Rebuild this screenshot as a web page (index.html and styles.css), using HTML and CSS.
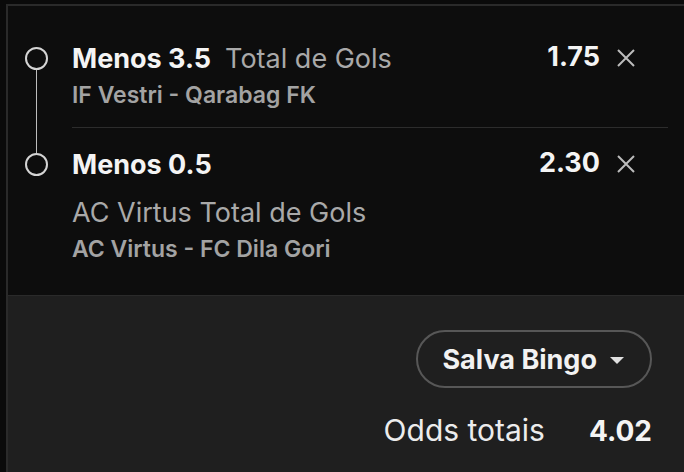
FILE: index.html
```html
<!DOCTYPE html>
<html lang="pt">
<head>
  <meta charset="UTF-8" />
  <meta name="viewport" content="width=device-width, initial-scale=1.0"/>
  <title>Boletim de apostas</title>
  <link rel="stylesheet" href="styles.css">
</head>
<body>
  <div class="slip">
    <ul class="legs">
      <li class="leg leg-first">
        <div class="marker">
          <span class="line line-in"></span>
          <span class="dot"></span>
          <span class="line line-out"></span>
        </div>
        <div class="leg-body">
          <div class="info">
            <div class="title-row">
              <span class="selection">Menos 3.5</span>
              <span class="market">Total de Gols</span>
            </div>
            <div class="event">IF Vestri - Qarabag FK</div>
          </div>
          <div class="odds">1.75</div>
          <button class="remove" title="Remover">
            <svg viewBox="0 0 20 20" width="20" height="20"><path d="M2 2 L18 18 M18 2 L2 18" /></svg>
          </button>
        </div>
      </li>
      <li class="leg leg-last">
        <div class="marker">
          <span class="line line-in"></span>
          <span class="dot"></span>
          <span class="line line-out"></span>
        </div>
        <div class="leg-body">
          <div class="info">
            <div class="title-row">
              <span class="selection">Menos 0.5</span>
            </div>
            <div class="market market-block">AC Virtus Total de Gols</div>
            <div class="event">AC Virtus - FC Dila Gori</div>
          </div>
          <div class="odds">2.30</div>
          <button class="remove" title="Remover">
            <svg viewBox="0 0 20 20" width="20" height="20"><path d="M2 2 L18 18 M18 2 L2 18" /></svg>
          </button>
        </div>
      </li>
    </ul>

    <div class="summary">
      <button class="bet-type">
        <span>Salva Bingo</span>
        <span class="caret"></span>
      </button>
      <div class="total">
        <span class="total-label">Odds totais</span>
        <span class="total-value">4.02</span>
      </div>
    </div>
  </div>
</body>
</html>
```

FILE: styles.css
```css
* {
  box-sizing: border-box;
}

html, body {
  height: 100%;
}

body {
  margin: 0;
  background: #0a0a0a;
  font-family: Inter, 'Noto Sans', sans-serif;
  color: #f2f2f2;
}

.slip {
  margin: 4px 0 0 6px;
  min-height: calc(100% - 4px);
  display: flex;
  flex-direction: column;
  border-top: 2px solid #2a2a2a;
  border-left: 2px solid #2a2a2a;
  background: #0d0d0d;
}

.legs {
  list-style: none;
  margin: 0;
  padding: 0;
}

.leg {
  display: flex;
  --pad: 37px;
}

.leg-last {
  --pad: 21px;
}

/* timeline marker */
.marker {
  width: 64px;
  flex-shrink: 0;
  display: flex;
  flex-direction: column;
  align-items: center;
  padding-right: 8px;
}

.line {
  width: 1px;
  background: #bdbdbd;
}

.line-in {
  height: calc(var(--pad) + 4px);
}

.line-out {
  flex: 1;
}

.leg-first .line-in,
.leg-last .line-out {
  background: transparent;
}

.dot {
  width: 23px;
  height: 23px;
  border: 2px solid #d4d4d4;
  border-radius: 50%;
  flex-shrink: 0;
}

.leg-body {
  flex: 1;
  display: grid;
  grid-template-columns: 1fr auto auto;
  align-items: start;
  column-gap: 14px;
  margin-right: 16px;
  padding: var(--pad) 30px 18px 0;
}

.leg-first .leg-body {
  border-bottom: 1px solid #2c2c2c;
}

.leg-last .leg-body {
  padding-bottom: 32px;
}

.title-row {
  display: flex;
  flex-wrap: wrap;
  column-gap: 14px;
  line-height: 32px;
  font-size: 27px;
}

.selection {
  font-weight: 700;
  color: #f4f4f4;
}

.market {
  font-weight: 400;
  color: #a9a9a9;
  font-size: 27px;
  line-height: 32px;
}

.market-block {
  margin-top: 16px;
}

.event {
  margin-top: 6px;
  font-size: 23px;
  line-height: 28px;
  font-weight: 600;
  color: #a3a3a3;
}

.odds {
  font-size: 27px;
  line-height: 32px;
  font-weight: 700;
  margin-top: -2px;
  color: #f4f4f4;
}

.remove {
  width: 24px;
  height: 32px;
  padding: 0;
  border: none;
  background: none;
  display: flex;
  align-items: center;
  justify-content: center;
  margin-top: -1px;
  cursor: pointer;
}

.remove path {
  stroke: #bcbcbc;
  stroke-width: 2;
  fill: none;
}

/* bottom summary */
.summary {
  flex: 1;
  background: #1f1f1f;
  border-top: 1px solid #2a2a2a;
  display: flex;
  flex-direction: column;
  align-items: flex-end;
  padding: 34px 32px 20px;
}

.bet-type {
  height: 58px;
  padding: 0 26px 0 24px;
  border: 2px solid #575757;
  border-radius: 29px;
  background: transparent;
  color: #f2f2f2;
  font-family: inherit;
  font-size: 27px;
  font-weight: 700;
  display: flex;
  align-items: center;
  gap: 13px;
  cursor: pointer;
}

.caret {
  width: 0;
  height: 0;
  border-left: 7px solid transparent;
  border-right: 7px solid transparent;
  border-top: 7px solid #e0e0e0;
  margin-top: 2px;
}

.total {
  margin-top: 24px;
  display: flex;
  align-items: baseline;
  gap: 44px;
  line-height: 36px;
}

.total-label {
  font-size: 30px;
  font-weight: 400;
  color: #ececec;
}

.total-value {
  font-size: 28px;
  font-weight: 700;
  color: #f4f4f4;
}
```
